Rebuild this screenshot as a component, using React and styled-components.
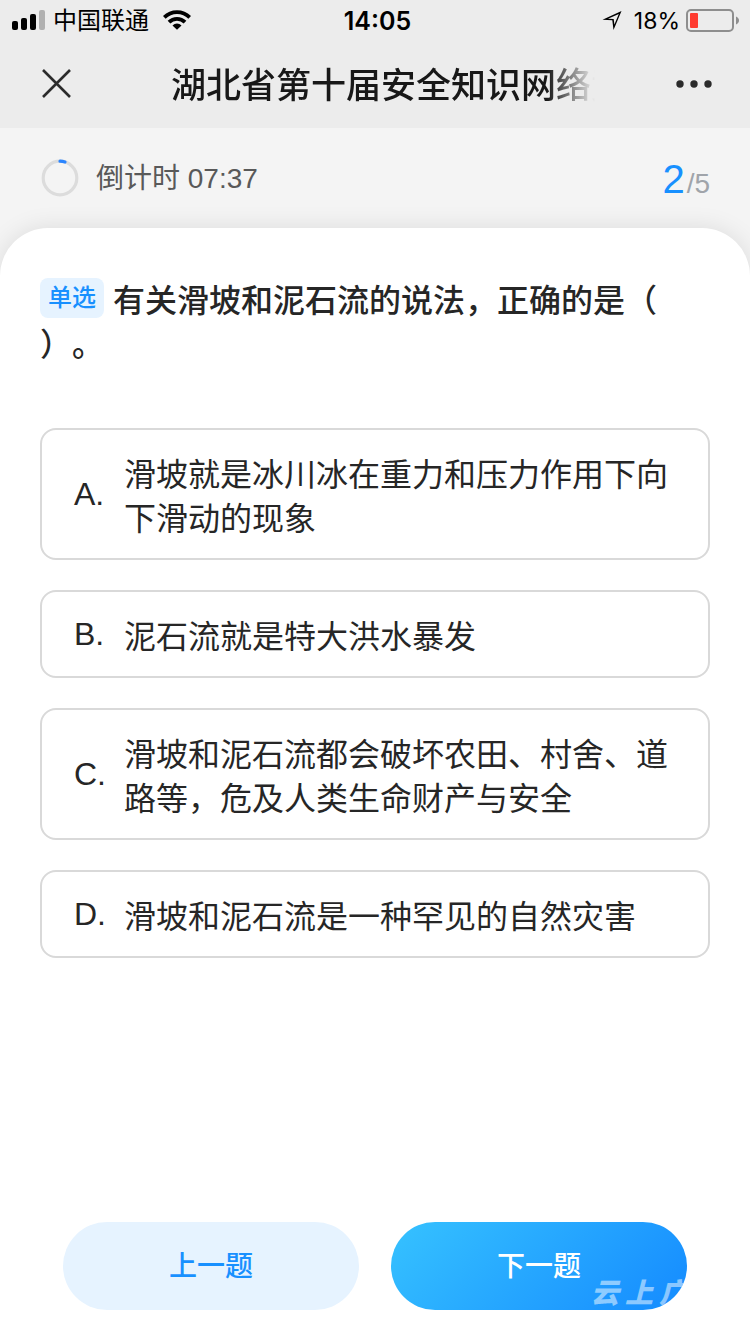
import React, { useState } from 'react'
import styled, { createGlobalStyle } from 'styled-components'

const GlobalStyle = createGlobalStyle`
  * {
    box-sizing: border-box;
  }
  body {
    margin: 0;
    background: #fff;
    color: #262626;
    font-family: 'Liberation Sans', 'Noto Sans CJK SC', sans-serif;
    text-spacing-trim: space-all;
  }
  button {
    border: 0;
    padding: 0;
    background: none;
    font: inherit;
    cursor: pointer;
  }
`

const Page = styled.div`
  display: flex;
  flex-direction: column;
  min-height: 100vh;
  background: #f4f4f4;
`

const TopBar = styled.header`
  background: #ececec;
  color: #000;
`

const StatusBar = styled.div`
  display: grid;
  grid-template-columns: 1fr auto 1fr;
  align-items: center;
  height: 40px;
  padding: 0 11px 0 12px;
  font-family: Inter, 'Noto Sans CJK SC', sans-serif;
  font-size: 24px;
  line-height: 36px;
`

const StatusGroup = styled.div`
  display: flex;
  align-items: center;
  justify-content: ${({ $end }) => ($end ? 'flex-end' : 'flex-start')};
`

const Carrier = styled.span`
  margin: 0 14px 0 7px;
  padding-top: 2px;
`

const Time = styled.time`
  padding: 2px 0 0 4px;
  font-size: 25px;
  font-weight: 600;
`

const Percent = styled.span`
  margin: 0 6px 0 12px;
  padding-top: 2px;
  font-size: 23px;
`

const NavBar = styled.div`
  display: flex;
  align-items: center;
  justify-content: space-between;
  height: 88px;
  padding: 0 36px 0 40px;
`

const NavButton = styled.button`
  display: flex;
  align-items: center;
  justify-content: ${({ $end }) => ($end ? 'flex-end' : 'flex-start')};
  width: 80px;
  height: 64px;
`

const Title = styled.h1`
  flex: 0 1 424px;
  margin: 0 0 2px 12px;
  overflow: hidden;
  color: #181818;
  font-family: 'Noto Sans CJK SC', sans-serif;
  font-size: 35px;
  font-weight: 500;
  line-height: 48px;
  white-space: nowrap;
  mask-image: linear-gradient(to left, transparent, #000 48px);
`

const Progress = styled.div`
  display: flex;
  align-items: center;
  justify-content: space-between;
  height: 100px;
  padding: 0 40px;
`

const Countdown = styled.div`
  display: flex;
  align-items: center;
  gap: 16px;
  color: #595959;
  font-size: 28px;
  line-height: 40px;
`

const TimeLeft = styled.span`
  padding-top: 2px;
`

const Counter = styled.div`
  padding-top: 6px;
  color: #a0a4aa;
  font-size: 28px;
  line-height: 48px;
`

const Current = styled.span`
  margin-right: 2px;
  color: #1890ff;
  font-size: 40px;
`

const Card = styled.main`
  display: flex;
  flex: 1;
  flex-direction: column;
  padding: 48px 40px 24px;
  border-radius: 48px 48px 0 0;
  background: #fff;
  box-shadow: 0 0 24px rgba(0, 0, 0, 0.1);
`

const Quiz = styled.fieldset`
  margin: 0;
  padding: 0;
  border: 0;
`

const Question = styled.legend`
  padding: 0;
  font-family: 'Noto Sans CJK SC', sans-serif;
  font-size: 32px;
  font-weight: 500;
  line-height: 44px;
`

const Tag = styled.span`
  display: inline-block;
  margin: 2px 9px 0 0;
  padding: 0 8px;
  border-radius: 8px;
  background: #e6f3ff;
  color: #1890ff;
  font-family: 'Liberation Sans', 'Noto Sans CJK SC', sans-serif;
  font-size: 24px;
  line-height: 40px;
  vertical-align: top;
`

const Options = styled.div`
  display: flex;
  flex-direction: column;
  gap: 30px;
  margin-top: 64px;
`

const Option = styled.label`
  display: flex;
  align-items: center;
  padding: 20px 32px;
  border: 2px solid ${({ $checked }) => ($checked ? '#1890ff' : '#d9d9d9')};
  border-radius: 16px;
  font-size: 32px;
  line-height: 44px;
  cursor: pointer;
`

const Radio = styled.input`
  position: absolute;
  width: 1px;
  height: 1px;
  margin: 0;
  opacity: 0;
`

const Letter = styled.span`
  flex: 0 0 50px;
`

const OptionText = styled.span`
  font-family: 'Noto Sans CJK SC', sans-serif;
`

const Actions = styled.div`
  display: flex;
  gap: 32px;
  margin-top: auto;
  padding: 0 23px;
`

const ActionButton = styled.button`
  position: relative;
  flex: 1;
  height: 88px;
  overflow: hidden;
  border-radius: 44px;
  background: ${({ $primary }) =>
    $primary ? 'linear-gradient(135deg, #36c2ff, #1890ff 90%)' : '#e6f3ff'};
  color: ${({ $primary }) => ($primary ? '#fff' : '#1890ff')};

  && {
    padding-bottom: 4px;
    font-size: 28px;
    font-weight: 500;
  }
`

const Watermark = styled.span`
  position: absolute;
  right: -6px;
  bottom: 0;
  color: rgba(255, 255, 255, 0.5);
  font-size: 28px;
  font-style: italic;
  font-weight: 900;
  line-height: 32px;
  letter-spacing: 6px;
  white-space: nowrap;
`

const SignalIcon = () => (
  <svg width='34' height='20' viewBox='0 0 34 20' aria-hidden='true'>
    <rect x='0' y='11' width='6' height='9' rx='2' />
    <rect x='9' y='8' width='6' height='12' rx='2' />
    <rect x='18' y='4' width='6' height='16' rx='2' />
    <rect x='27' y='0' width='6' height='20' rx='2' fill='#b0b0b0' />
  </svg>
)

const WifiIcon = () => (
  <svg width='28' height='20' viewBox='0 0 28 20' aria-hidden='true'>
    <g fill='none' stroke='#000' strokeWidth='3.8'>
      <path d='M1.3 7.3a18 18 0 0 1 25.4 0' />
      <path d='M6 12.1a11.3 11.3 0 0 1 16 0' />
    </g>
    <path d='M9.5 15.4a6.4 6.4 0 0 1 9 0L14 19.8z' />
  </svg>
)

const LocationIcon = () => (
  <svg width='20' height='20' viewBox='0 0 20 20' aria-hidden='true'>
    <path
      fillRule='evenodd'
      d='M.5 9.700 19.500 1 11.500 20 10.300 10.300zM6 8.700 11.700 8.900 12.400 14.400 16.800 3.900z'
    />
  </svg>
)

const BatteryIcon = () => (
  <svg width='53' height='24' viewBox='0 0 53 24' aria-hidden='true'>
    <rect
      x='1'
      y='2'
      width='46'
      height='21'
      rx='4'
      fill='none'
      stroke='#8e8e8e'
      strokeWidth='2'
    />
    <rect x='4' y='5' width='8' height='15' rx='1' fill='#ff3b30' />
    <path d='M50 8.5c4 1.5 4 6.5 0 8z' fill='#8e8e8e' />
  </svg>
)

const CloseIcon = () => (
  <svg width='32' height='32' viewBox='0 0 32 32' aria-hidden='true'>
    <path
      d='M3 2 30 29M30 2 3 29'
      fill='none'
      stroke='#2b2b2b'
      strokeWidth='2.6'
    />
  </svg>
)

const MoreIcon = () => (
  <svg width='38' height='8' viewBox='0 0 38 8' aria-hidden='true'>
    <g fill='#2b2b2b'>
      <circle cx='4' cy='4' r='3.7' />
      <circle cx='18' cy='4' r='3.7' />
      <circle cx='32' cy='4' r='3.7' />
    </g>
  </svg>
)

const TimerRing = () => (
  <svg width='40' height='40' viewBox='0 0 40 40' aria-hidden='true'>
    <g fill='none' strokeWidth='3.2'>
      <circle cx='20' cy='20' r='16.8' stroke='#dcdcdc' />
      <path
        d='M20 3.2a17 17 0 0 1 5 .8'
        stroke='#2b85ff'
        strokeLinecap='round'
      />
    </g>
  </svg>
)

const options = [
  { letter: 'A', text: '滑坡就是冰川冰在重力和压力作用下向下滑动的现象' },
  { letter: 'B', text: '泥石流就是特大洪水暴发' },
  { letter: 'C', text: '滑坡和泥石流都会破坏农田、村舍、道路等，危及人类生命财产与安全' },
  { letter: 'D', text: '滑坡和泥石流是一种罕见的自然灾害' },
]

const App = () => {
  const [answer, setAnswer] = useState(null)

  return (
    <Page>
      <GlobalStyle />
      <TopBar>
        <StatusBar>
          <StatusGroup>
            <SignalIcon />
            <Carrier>中国联通</Carrier>
            <WifiIcon />
          </StatusGroup>
          <Time>14:05</Time>
          <StatusGroup $end>
            <LocationIcon />
            <Percent>18%</Percent>
            <BatteryIcon />
          </StatusGroup>
        </StatusBar>
        <NavBar>
          <NavButton type='button' aria-label='关闭'>
            <CloseIcon />
          </NavButton>
          <Title>湖北省第十届安全知识网络竞赛</Title>
          <NavButton type='button' aria-label='更多' $end>
            <MoreIcon />
          </NavButton>
        </NavBar>
      </TopBar>
      <Progress>
        <Countdown>
          <TimerRing />
          <TimeLeft>倒计时 07:37</TimeLeft>
        </Countdown>
        <Counter>
          <Current>2</Current>/5
        </Counter>
      </Progress>
      <Card>
        <Quiz>
          <Question>
            <Tag>单选</Tag>
            有关滑坡和泥石流的说法，正确的是（
            <br />
            ）。
          </Question>
          <Options>
            {options.map(({ letter, text }) => (
              <Option key={letter} $checked={answer === letter}>
                <Radio
                  type='radio'
                  name='answer'
                  value={letter}
                  checked={answer === letter}
                  onChange={() => setAnswer(letter)}
                />
                <Letter>{letter}.</Letter>
                <OptionText>{text}</OptionText>
              </Option>
            ))}
          </Options>
        </Quiz>
        <Actions>
          <ActionButton type='button'>上一题</ActionButton>
          <ActionButton type='button' $primary>
            下一题
            <Watermark aria-hidden='true'>云上广</Watermark>
          </ActionButton>
        </Actions>
      </Card>
    </Page>
  )
}

export default App
